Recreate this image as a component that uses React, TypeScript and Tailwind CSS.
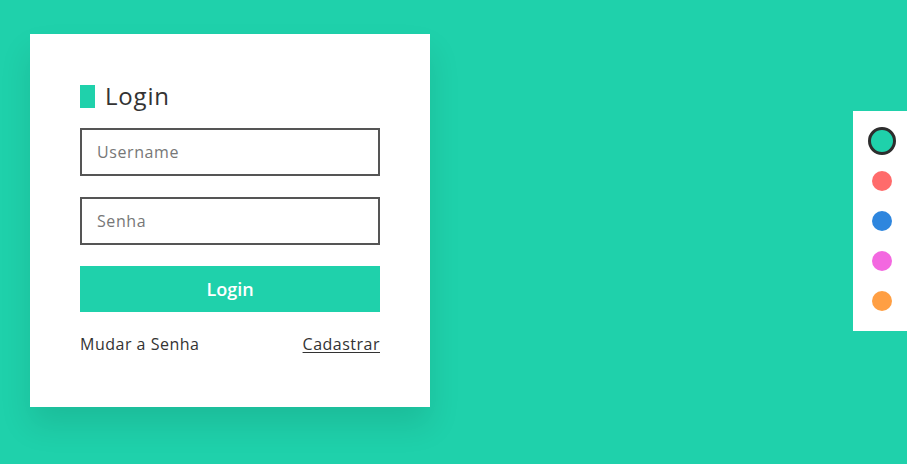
import { useState } from 'react'

const colors = [
  { name: 'green', bg: 'bg-[#1fd1ab]' },
  { name: 'red', bg: 'bg-[#ff6b6b]' },
  { name: 'blue', bg: 'bg-[#2e86de]' },
  { name: 'pink', bg: 'bg-[#f368e0]' },
  { name: 'orange', bg: 'bg-[#ff9f43]' },
]

export default function App() {
  const [active, setActive] = useState('green')

  return (
    <div className="relative w-full h-[464px] bg-[#1fd1ab] overflow-hidden font-['Open_Sans',sans-serif]">
      {/* Login card */}
      <div className="ml-[30px] pt-[34px]">
        <div className="w-[400px] h-[373px] bg-white px-[50px] pt-[47px] shadow-[0_18px_30px_rgba(0,0,0,0.1)]">
          <div className="flex items-center h-[30px] mb-[17px]">
            <span className="w-[15px] h-[23px] bg-[#1fd1ab] mr-[10px]"></span>
            <h1 className="text-[24px] tracking-[0.8px] text-[#333]">Login</h1>
          </div>

          <input
            type="text"
            placeholder="Username"
            className="block w-full h-12 border-2 border-[#555] px-[15px] text-[16px] tracking-[0.6px] text-[#333] placeholder:text-[#777] outline-none mb-[21px]"
          />
          <input
            type="password"
            placeholder="Senha"
            className="block w-full h-12 border-2 border-[#555] px-[15px] text-[16px] tracking-[0.6px] text-[#333] placeholder:text-[#777] outline-none mb-[21px]"
          />

          <button className="block w-full h-[46px] bg-[#1fd1ab] text-white text-[18px] font-semibold">
            Login
          </button>

          <div className="flex justify-between items-center mt-[20px] text-[16px] tracking-[0.5px] leading-6 text-[#333]">
            <a href="#">Mudar a Senha</a>
            <a href="#" className="underline underline-offset-2">Cadastrar</a>
          </div>
        </div>
      </div>

      {/* Theme switcher */}
      <div className="absolute right-0 top-[111px] w-[54px] h-[220px] bg-white flex flex-col items-center pt-[16px] pl-1">
        {colors.map((c) => (
          <div key={c.name} className="h-10 flex items-start justify-center">
            <button
              onClick={() => setActive(c.name)}
              className={
                active === c.name
                  ? `w-7 h-7 rounded-full border-[3px] border-[#2d2d2d] ${c.bg}`
                  : `w-5 h-5 mt-1 rounded-full ${c.bg}`
              }
            ></button>
          </div>
        ))}
      </div>
    </div>
  )
}
